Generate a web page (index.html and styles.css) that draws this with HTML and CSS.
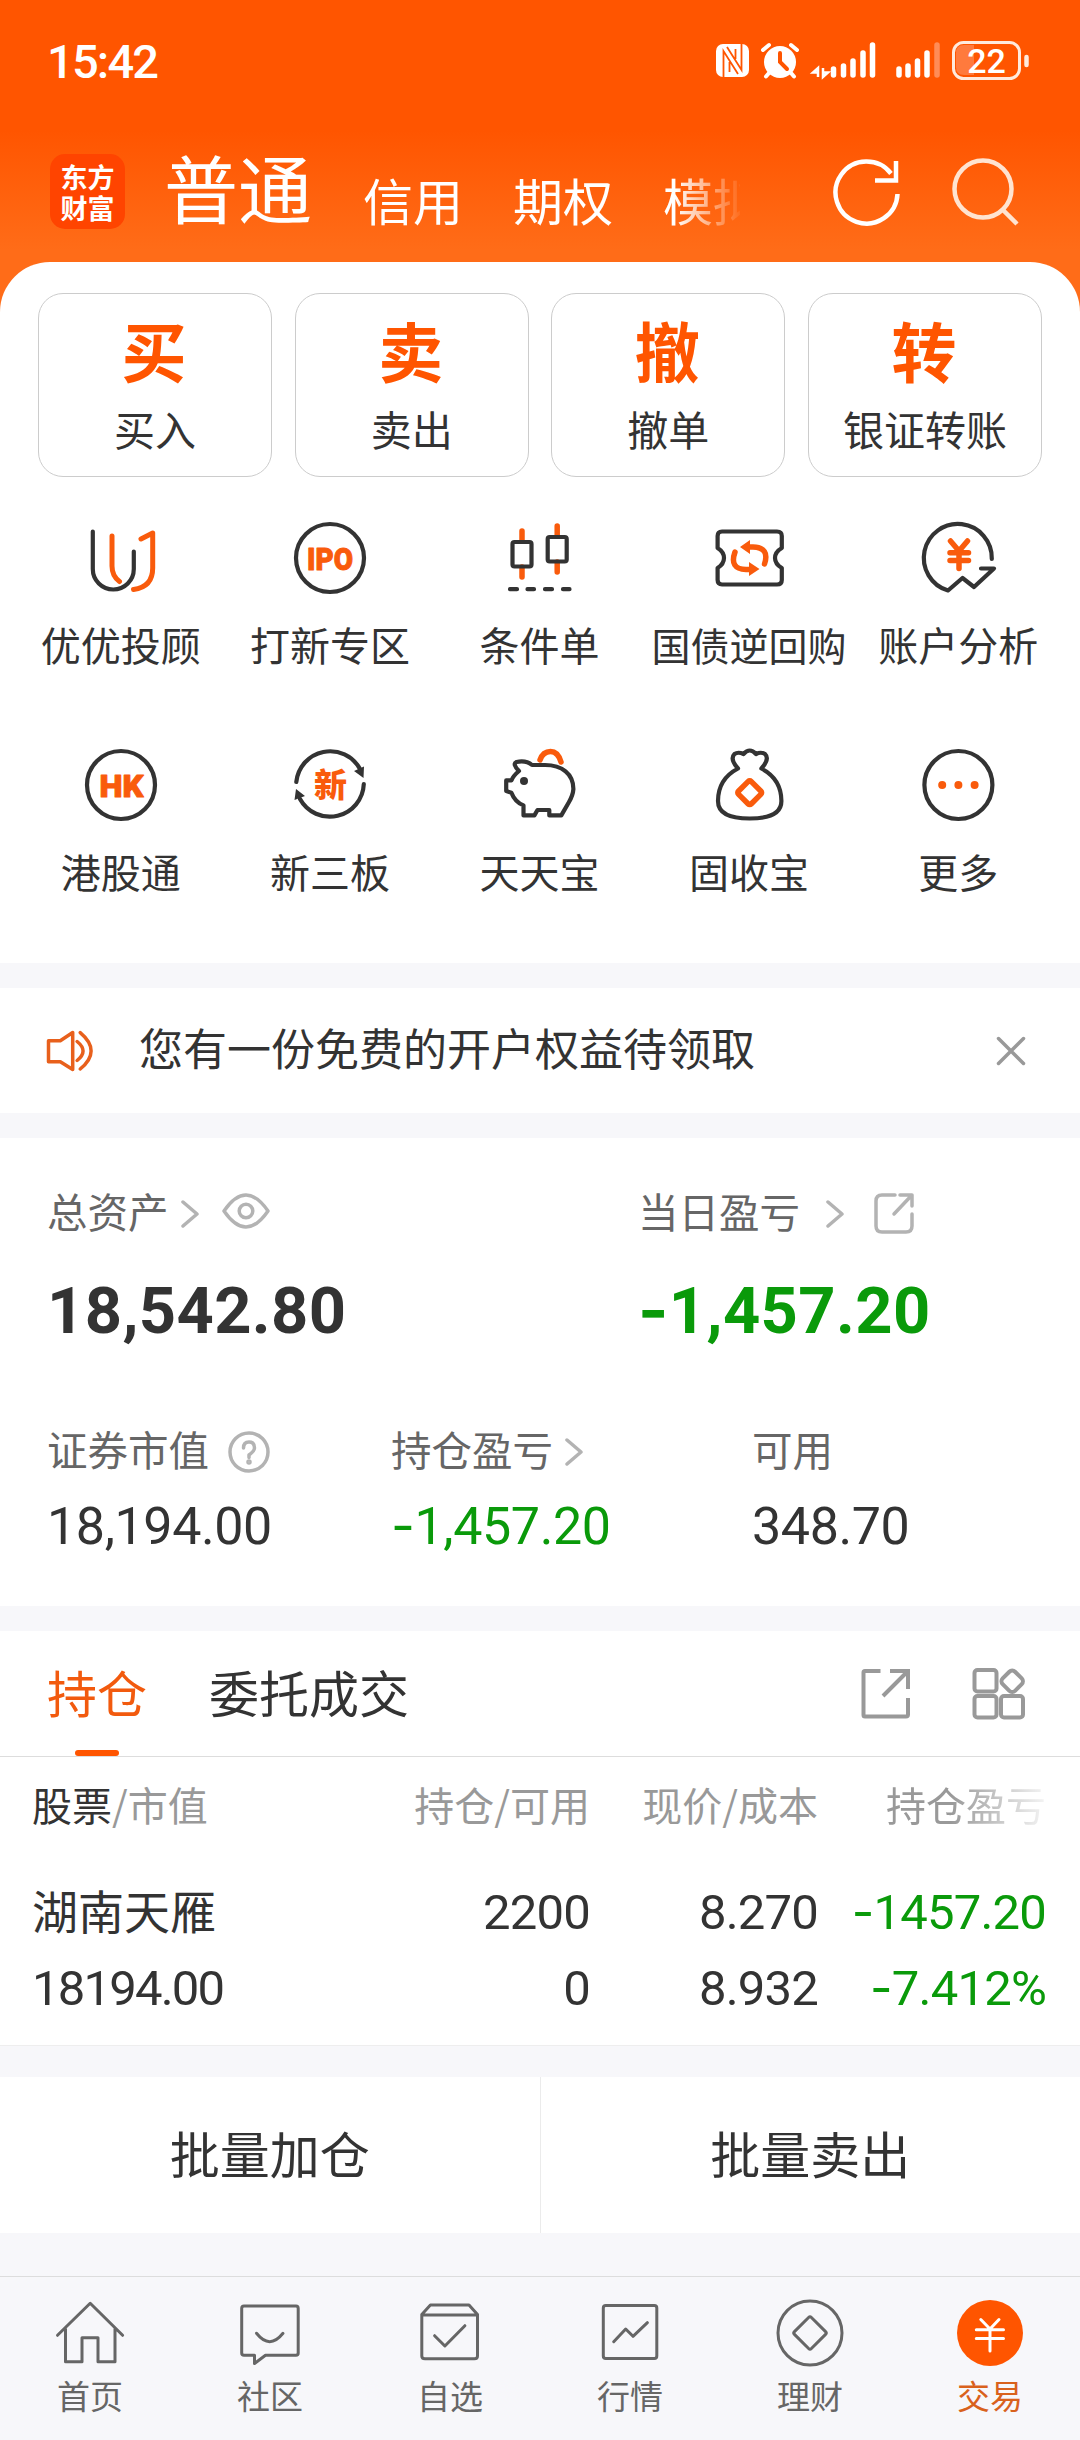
FILE: index.html
```html
<!DOCTYPE html>
<html lang="zh-CN">
  <head>
    <meta charset="UTF-8" />
    <title>东方财富 - 交易</title>
    <link rel="stylesheet" href="styles.css">
  </head>
  <body>
    <header class="header">
      <div class="status-bar">
        <span class="time">15:42</span>
        <svg class="status-icons" width="320" height="44" viewBox="0 0 320 44">
          <!-- nfc -->
          <rect x="5" y="7" width="33" height="33" rx="7" fill="#fff" />
          <path d="M12.500 40V14L27 37M30.500 7V33L16 10M18.500 35V25M24.500 12V22" fill="none" stroke="#ff5500" stroke-width="1.800" />
          <!-- alarm -->
          <circle cx="69" cy="25" r="16" fill="#fff" />
          <path d="M52 13L58 8M86 13L80 8M58 36L55 39.500M80 36L83 39.500" stroke="#fff" stroke-width="4" stroke-linecap="round" />
          <path d="M69 16V25L76 32" fill="none" stroke="#ff5500" stroke-width="4" stroke-linecap="round" />
          <!-- signals -->
          <path d="M107 40V31L102 35.500H107M112 31V40L117 35.500H112" fill="none" stroke="#fff" stroke-width="2.500" />
          <path d="M122.500 32V38M132.500 29V38M142 24V38M152 16V38M161.500 8V38" stroke="#fff" stroke-width="5.500" stroke-linecap="round" />
          <path d="M188 32V38M197 29V38M206.500 24V38M216 16V38" stroke="#fff" stroke-width="5.500" stroke-linecap="round" />
          <path d="M226 8V38" stroke="#ff8c57" stroke-width="5.500" stroke-linecap="round" />
          <!-- battery -->
          <path d="M253 8H263V38H253Q245 38 245 30V16Q245 8 253 8Z" fill="#ff7a3d" />
          <rect x="242.500" y="5.500" width="66" height="36" rx="10" fill="none" stroke="#ffeadd" stroke-width="3" />
          <path d="M315.500 20V28" stroke="#ffeadd" stroke-width="4.500" stroke-linecap="round" />
          <text class="battery-text" x="275.500" y="35.500" text-anchor="middle">22</text>
        </svg>
      </div>
      <nav class="account-nav">
        <div class="logo"><span>东方</span><span>财富</span></div>
        <div class="account-tabs">
          <span class="account-tab current">普通</span>
          <span class="account-tab">信用</span>
          <span class="account-tab">期权</span>
          <span class="account-tab">模拟</span>
        </div>
        <svg class="refresh" width="72" height="76" viewBox="0 0 72 76">
          <path d="M67.500 40A31 31 0 1 1 61 19.500" fill="none" stroke="#fff" stroke-width="4.500" />
          <path d="M66 7V26.500H45" fill="none" stroke="#fff" stroke-width="4.500" />
        </svg>
        <svg width="72" height="76" viewBox="0 0 72 76">
          <circle cx="33" cy="34" r="28.500" fill="none" stroke="#ffe3d0" stroke-width="4.500" />
          <path d="M52 54L67 69" stroke="#ffe3d0" stroke-width="4.500" />
        </svg>
      </nav>
    </header>

    <main>
      <section class="panel shortcuts">
        <div class="actions">
          <a class="action"><b>买</b><span>买入</span></a>
          <a class="action"><b>卖</b><span>卖出</span></a>
          <a class="action"><b>撤</b><span>撤单</span></a>
          <a class="action"><b>转</b><span>银证转账</span></a>
        </div>

        <div class="tools">
          <a class="tool">
            <svg class="icon" viewBox="0 0 80 80">
              <path d="M11.800 13.500V51a20.500 20.500 0 0 0 41 0V33.500" />
              <path class="accent" d="M31 18V48Q31 58 38.500 63.500M52.500 71.500Q71.700 69 71.700 50V15L60 21" />
            </svg>
            <span>优优投顾</span>
          </a>
          <a class="tool">
            <svg class="icon" viewBox="0 0 80 80">
              <circle cx="40" cy="40" r="34" />
              <text class="icon-text" x="17" y="51.500" textLength="46" lengthAdjust="spacingAndGlyphs">IPO</text>
            </svg>
            <span>打新专区</span>
          </a>
          <a class="tool">
            <svg class="icon" viewBox="0 0 80 80">
              <path class="accent wick" d="M23 13V23M23 49V59M58.200 8V17M58.200 44V54" />
              <rect x="13.500" y="24" width="19" height="24.500" rx="2" />
              <rect x="48.700" y="19" width="19" height="24.500" rx="2" />
              <path d="M11 71.200H18M28.500 71.200H35M46 71.200H53M64 71.200H70.500" />
            </svg>
            <span>条件单</span>
          </a>
          <a class="tool">
            <svg class="icon" viewBox="0 0 80 80">
              <path d="M13 13.500H68Q72.800 13.500 72.800 18V30Q66 34 66 40T72.800 50V62Q72.800 66.500 68 66.500H13Q8.600 66.500 8.600 62V50Q15 46 15 40T8.600 30V18Q8.600 13.500 13 13.500Z" />
              <path class="accent thick" d="M26 34Q20 51 37 51.500H42M55.500 46Q61 29.500 44 29H39" />
              <path class="fill" d="M41 22V36L31 29ZM40 44V58L50.500 51Z" />
            </svg>
            <span class="long">国债逆回购</span>
          </a>
          <a class="tool">
            <svg class="icon" viewBox="0 0 80 80">
              <path d="M73.800 41A34 34 0 1 0 30 72.500L44.500 60L56 69L76 50.500H63" />
              <path class="accent thick" d="M32.500 23L41 33L49.500 23M32 34.800H50.500M32 42.600H50.500M41 33V50.500" />
            </svg>
            <span>账户分析</span>
          </a>
          <a class="tool">
            <svg class="icon" viewBox="0 0 80 80">
              <circle cx="40" cy="40" r="34" />
              <text class="icon-text" x="18.500" y="51.500" textLength="44" lengthAdjust="spacingAndGlyphs">HK</text>
            </svg>
            <span>港股通</span>
          </a>
          <a class="tool">
            <svg class="icon" viewBox="0 0 80 80">
              <path d="M6.300 37A34 34 0 0 1 70 24M73.800 39A34 34 0 0 1 10 54" />
              <path class="fill-dark" d="M64 26L74 21.500L73.500 33ZM4.500 55L6 44L15 51Z" />
              <text class="icon-text cjk" x="40.500" y="52" text-anchor="middle">新</text>
            </svg>
            <span>新三板</span>
          </a>
          <a class="tool">
            <svg class="icon" viewBox="0 0 80 80">
              <path d="M20 26Q13 19 17.500 17Q27 15 33 20H46C63 20 74.400 29 74.400 44Q74 50 70 57L62.300 70.400H50.300V65H38.500L35.400 70.400H24.500V60.400Q16 57 12.400 47.700L7.200 46V35.400H12.500Q14 31 20 26Z" />
              <circle class="fill-dark" cx="25" cy="36" r="4" />
              <path class="accent thick" d="M41 15Q44 6.500 51.500 6.500T62 17" />
            </svg>
            <span>天天宝</span>
          </a>
          <a class="tool">
            <svg class="icon" viewBox="0 0 80 80">
              <path d="M29 23.500Q9 34 9 56Q9 73.500 40.700 73.500T72.400 56Q72.400 34 52.400 23.500Q61 14 56 9Q52 6.500 47 9Q40.700 2 34.500 9Q29 6.500 25.500 9Q20.500 14 29 23.500Z" />
              <rect class="accent thick" x="31.700" y="38.700" width="18" height="18" rx="2" transform="rotate(45 40.700 47.700)" />
            </svg>
            <span>固收宝</span>
          </a>
          <a class="tool">
            <svg class="icon" viewBox="0 0 80 80">
              <circle cx="40.400" cy="40" r="34" />
              <circle class="fill" cx="24.200" cy="40" r="4" />
              <circle class="fill" cx="40.400" cy="40" r="4" />
              <circle class="fill" cx="56.600" cy="40" r="4" />
            </svg>
            <span>更多</span>
          </a>
        </div>
      </section>

      <section class="panel notice">
        <svg width="48" height="42" viewBox="0 0 48 42" fill="none" stroke="#e8601c" stroke-width="3.500">
          <path d="M2.500 10.700H14.300L26.700 2.500V39.500L14.300 31.700H2.500Z" stroke-linejoin="round" />
          <path d="M31.100 11.500Q43 21 31.100 30.500M34.200 2.700Q56 21 34.200 39" stroke-linecap="round" />
        </svg>
        <p>您有一份免费的开户权益待领取</p>
        <svg width="30" height="30" viewBox="0 0 30 30">
          <path d="M2.500 2.500L27.500 27.500M27.500 2.500L2.500 27.500" stroke="#999" stroke-width="3.500" stroke-linecap="round" />
        </svg>
      </section>

      <section class="panel assets">
        <div class="assets-main">
          <div>
            <div class="label">
              总资产
              <svg class="chevron" viewBox="0 0 18 28"><path d="M2 2L16 14L2 26" /></svg>
              <svg class="eye" viewBox="0 0 48 36">
                <path d="M2 18Q24 -14 46 18Q24 50 2 18Z" />
                <circle cx="24" cy="18" r="6.800" />
              </svg>
            </div>
            <div class="total num">18,542.80</div>
          </div>
          <div>
            <div class="label">
              当日盈亏
              <svg class="chevron far" viewBox="0 0 18 28"><path d="M2 2L16 14L2 26" /></svg>
              <svg class="share" viewBox="0 0 42 42">
                <path d="M22 3H9Q3 3 3 9V34Q3 40 9 40H33Q39 40 39 34V22M27 3H39V14M21 22L39 3" />
              </svg>
            </div>
            <div class="total num down"><i>-</i>1,457.20</div>
          </div>
        </div>
        <div class="assets-sub">
          <div>
            <div class="label">
              证券市值
              <svg class="help" viewBox="0 0 42 42">
                <circle cx="21" cy="21" r="19" />
                <path d="M15.500 17Q15.500 11 21 11T26.500 17Q26.500 20 21 24V26.500" />
                <circle class="dot" cx="21" cy="31" r="1" />
              </svg>
            </div>
            <div class="value num">18,194.00</div>
          </div>
          <div>
            <div class="label">
              持仓盈亏
              <svg class="chevron" viewBox="0 0 18 28"><path d="M2 2L16 14L2 26" /></svg>
            </div>
            <div class="value num down"><i>-</i>1,457.20</div>
          </div>
          <div>
            <div class="label">可用</div>
            <div class="value num">348.70</div>
          </div>
        </div>
      </section>

      <section class="panel holdings">
        <div class="tabs">
          <span class="tab active">持仓</span>
          <span class="tab">委托成交</span>
          <svg width="52" height="54" viewBox="0 0 52 54" fill="none" stroke="#999" stroke-width="4">
            <path d="M20.500 4H5Q3.500 4 3.500 5.500V48Q3.500 49.500 5 49.500H46Q48 49.500 48 47.500V31M30 4H48V22M23 29L48 4" />
          </svg>
          <svg width="54" height="54" viewBox="0 0 54 54" fill="none" stroke="#999" stroke-width="4">
            <rect x="2.500" y="3" width="22" height="21.500" rx="3" />
            <rect x="2.500" y="29" width="22" height="21.500" rx="3" />
            <rect x="29" y="29" width="22" height="21.500" rx="3" />
            <rect x="31.500" y="5.500" width="17.500" height="17.500" rx="4" transform="rotate(45 40.200 14.200)" />
          </svg>
        </div>
        <table>
          <thead>
            <tr>
              <th><em>股票</em>/市值</th>
              <th>持仓/可用</th>
              <th>现价/成本</th>
              <th class="fade">持仓盈亏</th>
            </tr>
          </thead>
          <tbody>
            <tr>
              <td class="stock">湖南天雁</td>
              <td class="num">2200</td>
              <td class="num">8.270</td>
              <td class="num down"><i>-</i>1457.20</td>
            </tr>
            <tr>
              <td class="num market">18194.00</td>
              <td class="num">0</td>
              <td class="num">8.932</td>
              <td class="num down"><i>-</i>7.412%</td>
            </tr>
          </tbody>
        </table>
      </section>

      <section class="panel batch">
        <button>批量加仓</button>
        <button>批量卖出</button>
      </section>
    </main>

    <footer class="tab-bar">
      <a>
        <svg viewBox="0 0 72 72">
          <path d="M3.500 38.300L36.200 6.300L68.600 38.300M11.500 32V64.700H28V40.700H44V64.700H61V32" />
        </svg>
        首页
      </a>
      <a>
        <svg viewBox="0 0 72 72">
          <path d="M10 9H62Q64.200 9 64.200 11.500V56Q64.200 58.300 62 58.300H31.500L20.500 66.500V58.300H10Q7.700 58.300 7.700 56V11.500Q7.700 9 10 9Z" />
          <path d="M22.500 36.300Q35.700 53 49 36.300" />
        </svg>
        社区
      </a>
      <a>
        <svg viewBox="0 0 72 72">
          <path d="M7.800 17.500L16.400 8H55L63.500 17.500V59Q63.500 61.700 60.500 61.700H11Q7.800 61.700 7.800 59ZM7.800 18H63.500" />
          <path d="M20.600 38.700L30.900 49L50.900 28.700" />
        </svg>
        自选
      </a>
      <a>
        <svg viewBox="0 0 72 72">
          <rect x="9.300" y="8.500" width="53.500" height="53" rx="2.500" />
          <path d="M19.700 44.700L31.700 32L39 39.300L53.400 25.700" />
        </svg>
        行情
      </a>
      <a>
        <svg viewBox="0 0 72 72">
          <circle cx="36" cy="36" r="32" />
          <rect x="24" y="24" width="24" height="24" rx="2" transform="rotate(45 36 36)" />
        </svg>
        理财
      </a>
      <a class="on">
        <svg viewBox="0 0 72 72">
          <circle cx="36" cy="36" r="33" />
          <path d="M26.800 22.500L36 32L45 22.500M22.300 32.700H49.500M22.300 41.500H49.500M36 32V54" />
        </svg>
        交易
      </a>
    </footer>
  </body>
</html>
```
FILE: styles.css
```css
* {
  box-sizing: border-box;
}

body {
  width: 1080px;
  height: 2440px;
  margin: 0;
  background-color: #f7f7fa;
  color: #333;
  font-family: "Noto Sans CJK SC", "Noto Sans", sans-serif;
  font-size: 40px;
}

svg {
  display: block;
  flex-shrink: 0;
}

.num {
  font-family: Roboto, "Noto Sans CJK SC", sans-serif;
}

.num i {
  font-family: Inter, sans-serif;
  font-style: normal;
  line-height: 1;
}

.down {
  color: #0a9a0a;
}

/* Header */
.header {
  height: 322px;
  background: linear-gradient(#ff5500 130px, #ff6c18 250px);
  color: #fff;
}

.status-bar {
  display: flex;
  justify-content: space-between;
  height: 122px;
  padding: 37px 50px 0 47px;
}

.time {
  font-family: Roboto, sans-serif;
  font-size: 47px;
  font-weight: 500;
  line-height: 50px;
  letter-spacing: -1.8px;
}

.status-icons {
  margin-right: -1px;
}

.battery-text {
  fill: #fff;
  font-family: Roboto, sans-serif;
  font-size: 34px;
  font-weight: 500;
}

.account-nav {
  display: flex;
  align-items: flex-start;
  padding-left: 50px;
}

.logo {
  display: flex;
  flex-direction: column;
  align-items: center;
  justify-content: center;
  width: 75px;
  height: 75px;
  margin-top: 32px;
  border-radius: 15px;
  background-color: #ff4400;
  font-size: 27px;
  font-weight: 700;
  line-height: 31px;
}

.logo span {
  height: 31px;
}

.account-tabs {
  display: flex;
  align-items: baseline;
  gap: 50px;
  width: 576px;
  margin: 8px 90px 0 39px;
  overflow: hidden;
  white-space: nowrap;
  -webkit-mask-image: linear-gradient(90deg, #000 510px, transparent 580px);
  mask-image: linear-gradient(90deg, #000 510px, transparent 580px);
}

.account-tab {
  padding-top: 3px;
  font-size: 50px;
  transform: translateY(3px);
}

.account-tab.current {
  margin-right: 1px;
  padding-top: 0;
  font-size: 74px;
  line-height: 112px;
  transform: none;
}

.account-nav svg {
  margin-top: 33px;
}

.account-nav .refresh {
  margin-top: 32px;
  margin-right: 48px;
}

/* Shortcuts */
.panel {
  margin-bottom: 25px;
  background-color: #fff;
}

.shortcuts {
  height: 701px;
  margin-top: -60px;
  padding-top: 31px;
  border-radius: 50px 50px 0 0;
}

.actions {
  display: flex;
  justify-content: space-between;
  padding: 0 38px;
}

.action {
  display: flex;
  flex-direction: column;
  align-items: center;
  width: 234px;
  height: 184px;
  border: 1px solid #ccc;
  border-radius: 25px;
}

.action b {
  margin: 7px 2px 0 0;
  color: #ff5500;
  font-size: 65px;
  line-height: 96px;
}

.action span {
  margin-top: 3px;
  font-size: 41px;
  line-height: 56px;
}

.tools {
  display: grid;
  grid-template-columns: repeat(5, 1fr);
  row-gap: 73px;
  margin-top: 41px;
  padding: 0 17px 0 16px;
}

.tool {
  display: flex;
  flex-direction: column;
  align-items: center;
  white-space: nowrap;
}

.tool span {
  margin-top: 18px;
  line-height: 56px;
}

.tool .long {
  font-size: 39px;
}

.icon {
  width: 80px;
  height: 80px;
  fill: none;
  stroke: #333;
  stroke-width: 4.2;
  stroke-linecap: round;
  stroke-linejoin: round;
}

.icon .accent {
  stroke: #f95b0c;
  stroke-width: 5;
}

.icon .wick,
.icon .thick {
  stroke-width: 5.5;
}

.icon .fill {
  fill: #f95b0c;
  stroke: none;
}

.icon .fill-dark {
  fill: #333;
  stroke: none;
}

.icon-text {
  fill: #f95b0c;
  stroke: #f95b0c;
  stroke-width: 1;
  font-family: Roboto, sans-serif;
  font-size: 32px;
  font-weight: 900;
}

.icon-text.cjk {
  font-family: "Noto Sans CJK SC", sans-serif;
  font-size: 33px;
  stroke: none;
}

/* Notice */
.notice {
  display: flex;
  align-items: center;
  height: 125px;
  padding: 0 54px 0 46px;
}

.notice p {
  flex: 1;
  margin: -8px 0 0 45px;
  font-size: 44px;
}

/* Assets */
.assets {
  height: 468px;
  padding: 45px 0 0 47px;
}

.assets-main {
  display: grid;
  grid-template-columns: 591px 1fr;
}

.assets-sub {
  display: grid;
  grid-template-columns: 344px 361px 1fr;
  margin-top: 72px;
}

.label {
  display: flex;
  align-items: center;
  height: 56px;
  color: #666;
  font-size: 40.5px;
  line-height: 56px;
}

.label svg {
  fill: none;
  stroke: #b3b3b3;
  stroke-width: 3.5;
  stroke-linecap: round;
  stroke-linejoin: round;
}

.chevron {
  width: 18px;
  height: 28px;
  margin: 6px 0 0 12px;
}

.chevron.far {
  margin-left: 26px;
}

.eye {
  width: 48px;
  height: 36px;
  margin-left: 23px;
}

.share {
  width: 42px;
  height: 42px;
  margin: 4px 0 0 29px;
}

.help {
  width: 42px;
  height: 42px;
  margin: 5px 0 0 19px;
}

.help .dot {
  fill: #b3b3b3;
}

.total {
  margin-top: 34px;
  font-size: 65px;
  font-weight: 700;
  letter-spacing: 0.4px;
  line-height: 76px;
}

.value {
  margin-top: 20px;
  font-size: 52px;
  letter-spacing: -0.4px;
  line-height: 60px;
}

/* Holdings */
.holdings {
  height: 415px;
  margin-bottom: 31px;
  border-bottom: 1px solid #eee;
}

.tabs {
  display: flex;
  align-items: center;
  height: 126px;
  padding: 0 54px 0 47px;
  border-bottom: 1px solid #ddd;
}

.tab {
  display: flex;
  position: relative;
  align-items: center;
  height: 100%;
  margin-right: 62px;
  padding-bottom: 5px;
  font-size: 50px;
}

.tab:nth-child(2) {
  margin-right: auto;
}

.tab.active {
  color: #f25a0e;
}

.tab.active::after {
  content: "";
  position: absolute;
  bottom: 0;
  left: 28px;
  width: 44px;
  height: 6px;
  border-radius: 3px;
  background-color: #ff5500;
}

.tabs svg + svg {
  margin-left: 60px;
}

table {
  width: 1014px;
  margin-left: 32px;
  border-collapse: collapse;
  table-layout: fixed;
}

th,
td {
  width: 228px;
  padding: 0;
  text-align: right;
  white-space: nowrap;
}

th:first-child,
td:first-child {
  width: 330px;
  text-align: left;
}

th {
  height: 94px;
  color: #999;
  font-weight: 400;
}

th em {
  color: #333;
  font-style: normal;
}

td {
  height: 76px;
  font-size: 49px;
  letter-spacing: -0.8px;
  line-height: 76px;
  vertical-align: top;
}

tbody tr:first-child td {
  height: 100px;
  padding-top: 24px;
}

tbody tr:first-child .stock {
  padding-top: 20px;
  font-size: 46px;
  letter-spacing: 0;
}

.market {
  letter-spacing: -1.8px;
}

.fade {
  -webkit-mask-image: linear-gradient(90deg, #000 58%, rgba(0, 0, 0, 0.1));
  mask-image: linear-gradient(90deg, #000 58%, rgba(0, 0, 0, 0.1));
}

/* Batch buttons */
.batch {
  display: flex;
  height: 156px;
  margin-bottom: 43px;
}

.batch button {
  flex: 1;
  padding: 0 0 6px;
  border: none;
  background: none;
  color: #333;
  font-family: inherit;
  font-size: 50px;
}

.batch button:first-child {
  border-right: 1px solid #ebebeb;
}

/* Bottom bar */
.tab-bar {
  display: flex;
  height: 164px;
  padding-top: 20px;
  border-top: 1px solid #ddd;
}

.tab-bar a {
  display: flex;
  flex: 1;
  flex-direction: column;
  align-items: center;
  color: #666;
  font-size: 33px;
  line-height: 46px;
}

.tab-bar svg {
  width: 72px;
  height: 72px;
  margin-bottom: 3px;
  fill: none;
  stroke: #666;
  stroke-width: 3;
  stroke-linecap: round;
  stroke-linejoin: round;
}

.tab-bar .on {
  color: #d9611c;
}

.tab-bar .on svg {
  stroke: #fff;
}

.tab-bar .on circle {
  fill: #ff5500;
  stroke: none;
}
```
